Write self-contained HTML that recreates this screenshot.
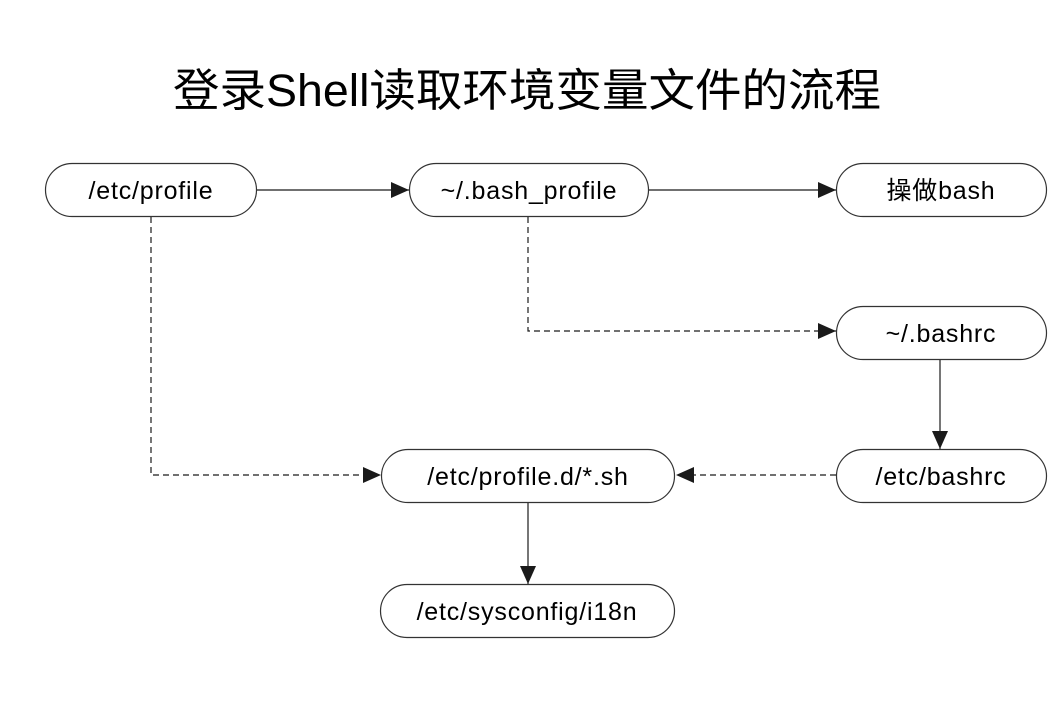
<!DOCTYPE html>
<html><head><meta charset="utf-8"><style>
html,body{margin:0;padding:0;background:#fff;width:1064px;height:703px;overflow:hidden}
text{font-family:"Liberation Sans","Noto Sans CJK SC",sans-serif;fill:#000}
</style></head><body>
<svg width="1064" height="703" viewBox="0 0 1064 703">
<defs><marker id="a" markerWidth="20" markerHeight="16" refX="18" refY="8" orient="auto" markerUnits="userSpaceOnUse"><path d="M0,0 L18,8 L0,16 Z" fill="#1a1a1a"/></marker></defs>
<text x="527" y="106" font-size="45" text-anchor="middle" textLength="708" lengthAdjust="spacingAndGlyphs">登录Shell读取环境变量文件的流程</text>
<g fill="none" stroke="#333" stroke-width="1.2">
<rect x="45.5" y="163.5" width="211" height="53" rx="26.5"/>
<rect x="409.5" y="163.5" width="239" height="53" rx="26.5"/>
<rect x="836.5" y="163.5" width="210" height="53" rx="26.5"/>
<rect x="836.5" y="306.5" width="210" height="53" rx="26.5"/>
<rect x="836.5" y="449.5" width="210" height="53" rx="26.5"/>
<rect x="381.5" y="449.5" width="293" height="53" rx="26.5"/>
<rect x="380.5" y="584.5" width="294" height="53" rx="26.5"/>
</g>
<g stroke="#1a1a1a" stroke-width="1.2" fill="none">
<path d="M257 190 H409" marker-end="url(#a)"/>
<path d="M649 190 H836" marker-end="url(#a)"/>
<path d="M940 360 V449" marker-end="url(#a)"/>
<path d="M528 503 V584" marker-end="url(#a)"/>
<g stroke-dasharray="6,4">
<path d="M151 217 V475 H381" marker-end="url(#a)"/>
<path d="M528 217 V331 H836" marker-end="url(#a)"/>
<path d="M836 475 H676" marker-end="url(#a)"/>
</g>
</g>
<g font-size="25" text-anchor="middle" letter-spacing="0.8">
<text x="151" y="199">/etc/profile</text>
<text x="529" y="199">~/.bash_profile</text>
<text x="941" y="199">操做bash</text>
<text x="941" y="342">~/.bashrc</text>
<text x="941" y="485">/etc/bashrc</text>
<text x="528" y="485">/etc/profile.d/*.sh</text>
<text x="527" y="620">/etc/sysconfig/i18n</text>
</g>
</svg>
</body></html>
